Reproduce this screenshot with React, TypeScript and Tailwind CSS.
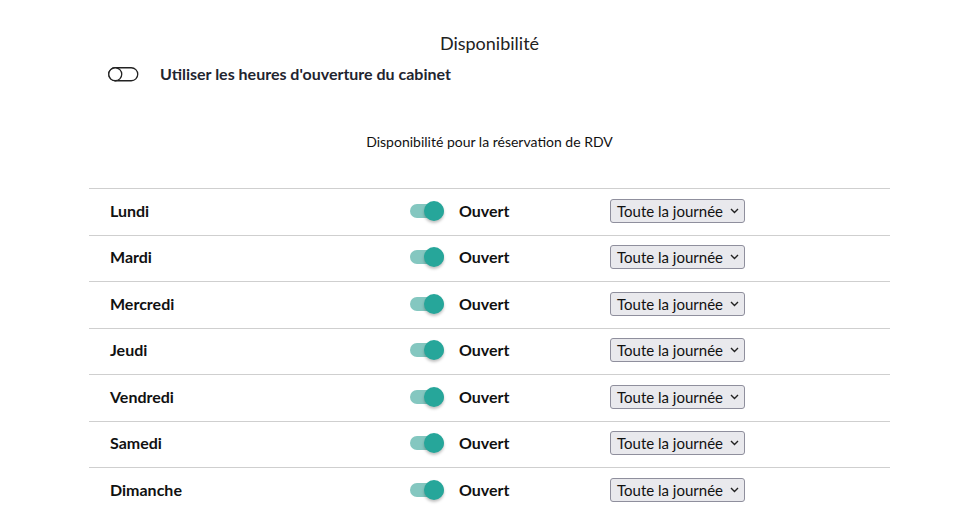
import React from "react";

const days = ["Lundi", "Mardi", "Mercredi", "Jeudi", "Vendredi", "Samedi", "Dimanche"];

function Switch() {
  return (
    <div className="relative w-[36px] h-[20px] flex items-center">
      <div className="w-[34px] h-[14px] rounded-full bg-[#84c7c0]" />
      <div className="absolute left-[14px] top-0 w-[20px] h-[20px] rounded-full bg-[#26a69a] shadow-[0_2px_3px_rgba(0,0,0,0.25)]" />
    </div>
  );
}

function Chevron() {
  return (
    <svg width="9" height="6" viewBox="0 0 9 6" className="ml-[7px]">
      <path d="M1 1 L4.5 4.5 L8 1" fill="none" stroke="#222" strokeWidth="1.4" />
    </svg>
  );
}

export default function App() {
  return (
    <div className="w-[954px] h-[524px] bg-white overflow-hidden font-['Lato','Noto_Sans',sans-serif] text-[#111]">
      <div className="ml-[89px] w-[801px] flex flex-col">
        <div className="mt-[31px] h-[24px] flex items-center justify-center text-[18px] text-[#222]">
          Disponibilité
        </div>
        <div className="mt-[7px] h-[24px] flex items-center">
          <svg width="31" height="15" viewBox="0 0 31 15" className="ml-[19px]">
            <rect x="0.75" y="0.75" width="29" height="13" rx="6.5" fill="none" stroke="#222" strokeWidth="1.3" />
            <circle cx="7.25" cy="7.25" r="6.5" fill="white" stroke="#222" strokeWidth="1.3" />
          </svg>
          <span className="ml-[21px] text-[16px] font-bold text-[#1f2530]">
            Utiliser les heures d'ouverture du cabinet
          </span>
        </div>
        <div className="mt-[45px] h-[20px] flex items-center justify-center text-[14px] text-[#111]">
          Disponibilité pour la réservation de RDV
        </div>
        <div className="mt-[37px] flex flex-col">
          {days.map((d) => (
            <div key={d} className="h-[46.5px] pb-[2px] border-t border-[#cfcfcf] flex items-center">
              <span className="ml-[21px] w-[300px] text-[16px] font-bold">{d}</span>
              <Switch />
              <span className="ml-[13px] w-[151px] text-[16px] font-bold">Ouvert</span>
              <div className="h-[24px] w-[135px] flex items-center pl-[6px] rounded-[3px] border border-[#8f8f9d] bg-[#e9e9ed] text-[15px] text-[#111]">
                Toute la journée
                <Chevron />
              </div>
            </div>
          ))}
        </div>
      </div>
    </div>
  );
}
